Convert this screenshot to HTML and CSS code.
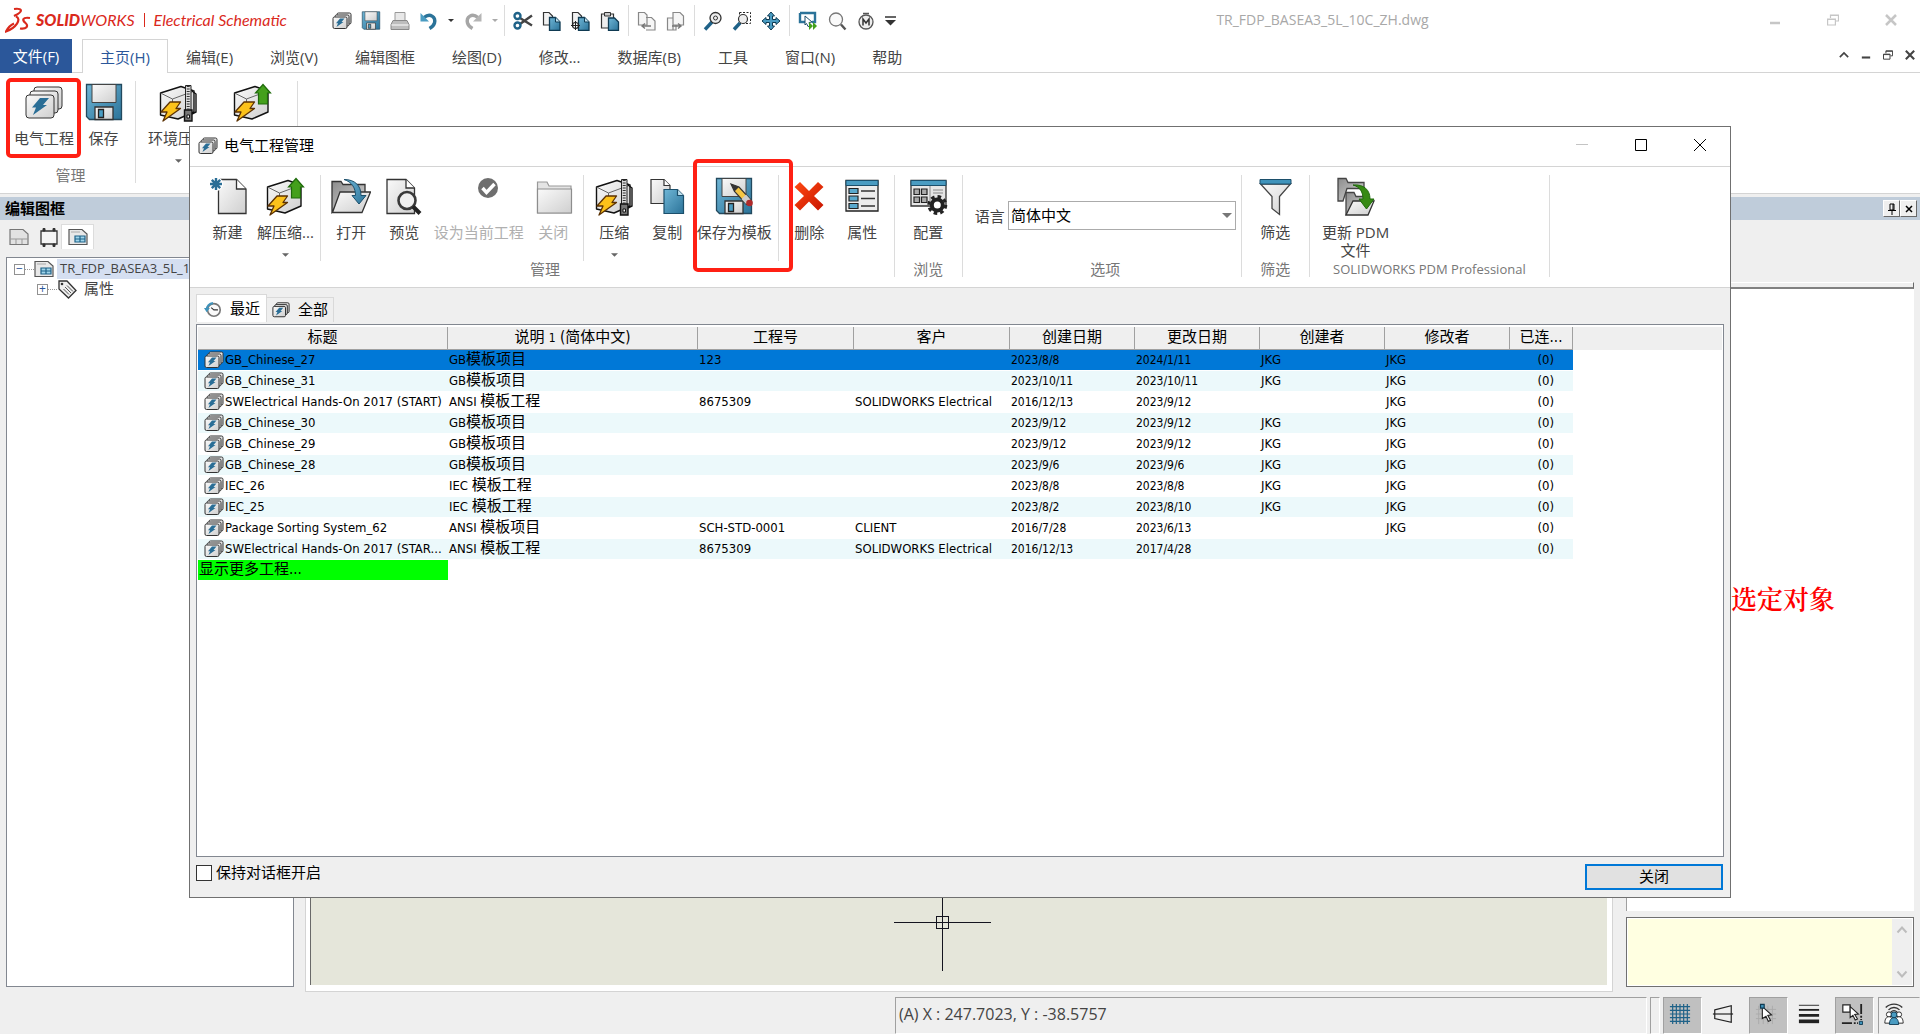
FILE: index.html
```html
<!DOCTYPE html>
<html lang="zh-CN">
<head>
    <meta charset="UTF-8">
    <meta name="viewport" content="width=device-width, initial-scale=1.0">
    <title>SOLIDWORKS Electrical Schematic</title>
    <link rel="stylesheet" href="styles.css">
</head>
<body>
    <!-- icon set -->
    <svg class="sprite" aria-hidden="true">
        <defs>
            <linearGradient id="gGray" x1="0" y1="0" x2="1" y2="1"><stop offset="0" stop-color="#fafafa"/><stop offset="1" stop-color="#cfcfcf"/></linearGradient>
            <linearGradient id="gDark" x1="0" y1="0" x2="1" y2="1"><stop offset="0" stop-color="#8c8c8c"/><stop offset="1" stop-color="#d8d8d8"/></linearGradient>
            <linearGradient id="gBlue" x1="0" y1="0" x2="1" y2="1"><stop offset="0" stop-color="#6fb6d6"/><stop offset="1" stop-color="#2b7399"/></linearGradient>
            <linearGradient id="gRed" x1="0" y1="0" x2="1" y2="1"><stop offset="0" stop-color="#ff4a12"/><stop offset="1" stop-color="#c81400"/></linearGradient>
        </defs>
        <symbol id="i-project" viewBox="0 0 40 40">
            <g fill="url(#gGray)" stroke="#333" stroke-linejoin="round">
                <rect class="thin" x="10" y="4" width="28" height="22" rx="3"/>
                <rect class="thin" x="6" y="8" width="28" height="22" rx="3"/>
                <rect class="thin" x="2" y="12" width="28" height="23" rx="3"/>
            </g>
            <path d="M16 15h9l-6 7h4L9 32l3-7.500H8z" fill="#2a6e96"/>
        </symbol>
        <symbol id="i-save" viewBox="0 0 40 40">
            <path d="M2.500 1.500h35v35h-32l-3-3z" fill="url(#gBlue)" stroke="#22495e" stroke-width="1.300"/>
            <path d="M8 1.500h24v18H8z" fill="url(#gGray)" stroke="#444"/>
            <path d="M11 24h18v12.500H11z" fill="url(#gGray)" stroke="#333" stroke-width="1.300"/>
            <path d="M14.500 26.500h5v8h-5z" fill="#4a9cc2" stroke="#222" stroke-width="1.300"/>
        </symbol>
        <symbol id="i-cube" viewBox="0 0 40 40">
            <path d="M2.500 10 23 3.500l13 4.500v21L20 36 2.500 32z" fill="url(#gGray)" stroke="#111" stroke-width="1.400" stroke-linejoin="round"/>
            <path d="m2.500 10 12 6L36 8M14.500 16v8" fill="none" stroke="#666"/>
            <path d="M12 19h10.500L18 25.500h4.500L5 38l4-9H3z" fill="#fcc21b" stroke="#5c3203" stroke-width="1.300" stroke-linejoin="round"/>
        </symbol>
        <symbol id="i-archive" viewBox="0 0 40 40">
            <use href="#i-cube" width="40" height="40"/>
            <path d="M27.500 2.500h5.500V28h-5.500z" fill="#ddd" stroke="#222"/>
            <path d="M30.200 3v24" stroke="#333" stroke-width="3" stroke-dasharray="1 1.500"/>
            <path d="M26.500 27h7.500v11h-7.500z" fill="#777" stroke="#111" stroke-width="1.400"/>
            <path d="M29 32h2.500v3H29z" fill="#fff" stroke="#111"/>
            <path d="m34 8 4 3v18l-4 2" fill="none" stroke="#111" stroke-width="1.400"/>
        </symbol>
        <symbol id="i-unarchive" viewBox="0 0 40 40">
            <use href="#i-cube" width="40" height="40"/>
            <path d="m31 1.500 7.500 8.500h-3v11h-9V10h-3z" fill="#44a01c" stroke="#1f6a0b" stroke-width="1.200"/>
        </symbol>
        <symbol id="i-new" viewBox="0 0 40 40">
            <path d="M10.500 2.500h18l9.500 9.500v24.500H10.500z" fill="url(#gGray)" stroke="#333" stroke-width="1.300"/>
            <path d="M28.500 2.500V12H38" fill="#fff" stroke="#333" stroke-width="1.300"/>
            <circle cx="8" cy="7" r="7" fill="#fff"/>
            <path d="M8 1v12M2 7h12M3.800 2.800l8.400 8.400M12.200 2.800l-8.400 8.400" stroke="#2a6e96" stroke-width="2.400"/>
        </symbol>
        <symbol id="i-open" viewBox="0 0 40 40">
            <path d="M1 35V4.500h9l2 3h22V20H10z" fill="url(#gDark)" stroke="#333" stroke-width="1.300"/>
            <path d="M1.500 35.500 9 15h30.500L31 35.500z" fill="url(#gGray)" stroke="#333" stroke-width="1.300"/>
            <path d="M13 2.500c11 0 17 6 17 16h5l-7 8.500-7-8.500h3.500C24.500 11 21 5 13 2.500z" fill="url(#gBlue)" stroke="#1c4f6b"/>
        </symbol>
        <symbol id="i-preview" viewBox="0 0 40 40">
            <path d="M3 2.500h19l8.500 8.500v25.500H3z" fill="url(#gGray)" stroke="#333" stroke-width="1.300"/>
            <path d="M22 2.500V11h8.500" fill="#fff" stroke="#333" stroke-width="1.300"/>
            <circle cx="23" cy="23.500" r="8.500" fill="#f0f0f0" stroke="#3a3a3a" stroke-width="2.600"/>
            <path d="m29 29.500 7 7" stroke="#222" stroke-width="4"/>
        </symbol>
        <symbol id="i-check" viewBox="0 0 40 40">
            <circle cx="29" cy="11" r="10" fill="#6e6e6e"/>
            <path d="m23.500 11 4 4.500 8-8.500" fill="none" stroke="#fff" stroke-width="3.400"/>
        </symbol>
        <symbol id="i-folder" viewBox="0 0 40 40">
            <path d="M4.500 36V5h9.500l2 4h22v27z" fill="#e4e4e4" stroke="#999" stroke-width="1.200"/>
            <path d="M4.500 12h34v24h-34z" fill="url(#gGray)" stroke="#8d8d8d" stroke-width="1.200"/>
        </symbol>
        <symbol id="i-copy" viewBox="0 0 40 40">
            <path d="M4 2.500h13l6 6v18H4z" fill="url(#gGray)" stroke="#333" stroke-width="1.200"/>
            <path d="M17 2.500v6h6" fill="#fff" stroke="#333" stroke-width="1.200"/>
            <path d="M17 12.500h13.500l6 6v18H17z" fill="url(#gBlue)" stroke="#1c4f6b" stroke-width="1.200"/>
            <path d="M30.500 12.500v6h6" fill="#bfe0ee" stroke="#1c4f6b" stroke-width="1.200"/>
        </symbol>
        <symbol id="i-savetpl" viewBox="0 0 40 40">
            <use href="#i-save" width="40" height="40"/>
            <path d="m17 7 8 3 12 13-4.500 4.500-12-13z" fill="#f5c542" stroke="#333" stroke-width="1.200"/>
            <path d="m17 7 8 3-4.500 4.500z" fill="#333"/>
            <path d="m32 17.500 4.500 5-4.500 4.500-4.500-5z" fill="#ccc"/>
            <circle cx="35.500" cy="26" r="3.300" fill="#b02a2a"/>
        </symbol>
        <symbol id="i-delete" viewBox="0 0 40 40">
            <path d="m11 5 9 9 9-9 5.500 5-9.500 9 9.500 9-5.500 5.500-9-9-9 9L5.500 28l9.500-9-9.500-9z" fill="url(#gRed)"/>
        </symbol>
        <symbol id="i-props" viewBox="0 0 40 40">
            <path d="M4 3.500h32v30.500H4z" fill="#ececec" stroke="#222" stroke-width="1.300"/>
            <path d="M4 3.500h32v5H4z" fill="#4a9cc2" stroke="#1c4f6b"/>
            <path d="M7 11.500h9v5H7zM7 19h9v5H7zM7 26.500h9v5H7z" fill="#5aa9cd" stroke="#222" stroke-width="1.200"/>
            <path d="M19 14h14M19 21.500h14M19 29h14" stroke="#333" stroke-width="1.300"/>
        </symbol>
        <symbol id="i-config" viewBox="0 0 40 40">
            <path d="M3 3.500h35V29H3z" fill="#e6e6e6" stroke="#333" stroke-width="1.300"/>
            <path d="M3 3.500h35v5H3z" fill="#4a9cc2" stroke="#1c4f6b"/>
            <path d="M6 12h5.500v5.500H6zM13.500 12H19v5.500h-5.500zM6 20h5.500v5.500H6zM13.500 20H19v5.500h-5.500z" fill="#aaa" stroke="#222" stroke-width="1.200"/>
            <path d="M22 9v20M25 13h10M25 16h10" stroke="#888"/>
            <circle cx="29.300" cy="28" r="8.500" fill="none" stroke="#222" stroke-width="3" stroke-dasharray="3.600 3.075"/>
            <circle cx="29.300" cy="28" r="5.500" fill="#fff" stroke="#222" stroke-width="4"/>
        </symbol>
        <symbol id="i-filter" viewBox="0 0 40 40">
            <path d="M5.500 7h30L24.500 19.500v18l-7.500-6v-12z" fill="url(#gGray)" stroke="#444" stroke-width="1.300"/>
            <path d="M5 2.500h31V7H5z" fill="#3f93bb" stroke="#1c4f6b"/>
        </symbol>
        <symbol id="i-pdm" viewBox="0 0 40 40">
            <path d="M2 24V1.500h8l2 4h16v6H11L7 24z" fill="url(#gDark)" stroke="#444" stroke-width="1.300"/>
            <path d="M10 38V15.500h8l2 4h10v8" fill="url(#gDark)" stroke="#444" stroke-width="1.300"/>
            <path d="m10 38 7-14h21l-6 14z" fill="url(#gGray)" stroke="#333" stroke-width="1.300"/>
            <path d="M17 8c11-1 17 5 17 14h4l-7.500 10L23 22h4c0-7-3-12-10-14z" fill="#378a14" stroke="#1f6a0b"/>
        </symbol>
        <symbol id="i-print" viewBox="0 0 20 20">
            <path d="M5 1.500h10V11H5z" fill="#e8e8e8" stroke="#999"/>
            <path d="M3 9.500h14l2 4v5H1v-5z" fill="#bdbdbd" stroke="#888"/>
            <path d="M1.500 14h17" stroke="#fff"/>
        </symbol>
        <symbol id="i-undo" viewBox="0 0 20 20">
            <path d="M5 6.500C11 1.500 17 6 15.500 12c-.7 2.700-2.500 4-5 5.500" fill="none" stroke="#2b7399" stroke-width="3.400"/>
            <path d="M1.500 2v8.500H10z" fill="#4a9cc2"/>
        </symbol>
        <symbol id="i-redo" viewBox="0 0 20 20">
            <path d="M15 6.500C9 1.500 3 6 4.500 12c.7 2.700 2.500 4 5 5.500" fill="none" stroke="#a6a6a6" stroke-width="3.400"/>
            <path d="M18.500 2v8.500H10z" fill="#b5b5b5"/>
        </symbol>
        <symbol id="i-cut" viewBox="0 0 20 20">
            <path d="M7 7l12 7.500M7 13l12-8.500" stroke="#444" stroke-width="2.400"/>
            <circle cx="4.500" cy="5" r="3" fill="none" stroke="#1f6288" stroke-width="2.400"/>
            <circle cx="4.500" cy="14.500" r="3" fill="none" stroke="#1f6288" stroke-width="2.400"/>
        </symbol>
        <symbol id="i-copys" viewBox="0 0 20 20">
            <path d="M1.500 1.500H7l3.500 3.500v9h-9z" fill="#f2f2f2" stroke="#333" stroke-width="1.200"/>
            <path d="M7.500 6.500h6L18 11v8.500H7.500z" fill="url(#gBlue)" stroke="#0f3a52" stroke-width="1.300"/>
            <path d="M13.500 6.500V11H18" fill="#bfe0ee" stroke="#0f3a52"/>
        </symbol>
        <symbol id="i-copybase" viewBox="0 0 20 20">
            <use href="#i-copys" width="20" height="20"/>
            <circle cx="4.500" cy="14.500" r="3" fill="#fff" stroke="#222" stroke-width="1.200"/>
            <path d="M4.500 10v9M0 14.500h9" stroke="#222"/>
        </symbol>
        <symbol id="i-paste" viewBox="0 0 20 20">
            <path d="M1.500 3h12v14h-12z" fill="#eee" stroke="#333" stroke-width="1.200"/>
            <path d="M4.500 1.500h6V5h-6z" fill="#ccc" stroke="#333"/>
            <path d="M8.500 7h6l4 4v8.500h-10z" fill="url(#gBlue)" stroke="#0f3a52" stroke-width="1.300"/>
        </symbol>
        <symbol id="i-docin" viewBox="0 0 20 20">
            <path d="M1.500 1.500h6L10 4v10H1.500zM9 6.500h5.500L18 10v9H9" fill="#f6f6f6" stroke="#888" stroke-width="1.200"/>
            <path d="M14 15H5m3-2.500L5 15l3 2.500" fill="none" stroke="#777" stroke-width="1.400"/>
        </symbol>
        <symbol id="i-docout" viewBox="0 0 20 20">
            <path d="M7 1.500h7L17.500 5v9H7zM1.500 7H7v12H1.500zM10 14v5H2" fill="#f6f6f6" stroke="#888" stroke-width="1.200"/>
            <path d="M6 15h9m-3-2.500 3 2.500-3 2.500" fill="none" stroke="#777" stroke-width="1.400"/>
        </symbol>
        <symbol id="i-zoom" viewBox="0 0 20 20">
            <path d="m9 11-7 7.500" stroke="#1f6288" stroke-width="3.400"/>
            <circle cx="12.500" cy="7" r="5.500" fill="#eee" stroke="#333" stroke-width="1.300"/>
            <circle cx="12.500" cy="7" r="2" fill="none" stroke="#333"/>
        </symbol>
        <symbol id="i-zoomwin" viewBox="0 0 20 20">
            <path d="M7.500 1.500h11v11h-11z" fill="none" stroke="#222" stroke-dasharray="2 1.500"/>
            <path d="m8 12-6 6.500" stroke="#1f6288" stroke-width="3.400"/>
            <circle cx="11" cy="8" r="4.500" fill="#eee" stroke="#333" stroke-width="1.200"/>
        </symbol>
        <symbol id="i-pan" viewBox="0 0 20 20">
            <path d="m10 1 3.500 4h-2v3.500H15v-2l4 3.500-4 3.500v-2h-3.500V15h2L10 19l-3.500-4h2v-3.500H5v2L1 10l4-3.500v2h3.500V5h-2z" fill="#4a9cc2" stroke="#0f3a52"/>
        </symbol>
        <symbol id="i-screen" viewBox="0 0 20 20">
            <path d="M2 2h15v9h-3M2 2v9h6" fill="none" stroke="#2b7399" stroke-width="2.400"/>
            <path d="m7 5 7 6-3 .5 1 3.500-2 .5-1.500-3L7 14z" fill="#fff" stroke="#1c4f6b"/>
            <path d="m11 11 4 4-4 4zm4 0 4 4-4 4z" fill="#44a01c"/>
        </symbol>
        <symbol id="i-search" viewBox="0 0 20 20">
            <circle cx="9" cy="8.500" r="6.500" fill="#fafafa" stroke="#777" stroke-width="1.300"/>
            <path d="m14 13.500 4.500 5" stroke="#555" stroke-width="2.400"/>
        </symbol>
        <symbol id="i-motor" viewBox="0 0 20 20">
            <path d="M7 2.500h6" stroke="#555" stroke-width="1.500"/>
            <circle cx="10" cy="11" r="7" fill="#eee" stroke="#555" stroke-width="1.300"/>
            <path d="M7 14.500V8l3 4 3-4v6.500" fill="none" stroke="#333" stroke-width="1.500"/>
        </symbol>
        <symbol id="i-sheet" viewBox="0 0 20 20">
            <path d="M1 2.500h13l5 4.500v10.500H1z" fill="#e2e2e2" stroke="#777" stroke-width="1.200"/>
            <path d="M1 12h18M7 12v5M13 12v5" stroke="#999"/>
        </symbol>
        <symbol id="i-frame" viewBox="0 0 20 20">
            <path d="M2 4h16v13H2z" fill="#f4f4f4" stroke="#333" stroke-width="1.300"/>
            <path d="M4 1.500h2V4H4zM14 1.500h2V4h-2zM4 17h2v2.500H4zM14 17h2v2.500h-2z" fill="#333" stroke="#333"/>
        </symbol>
        <symbol id="i-layout" viewBox="0 0 20 20">
            <path d="M1 2.500h13l5 4.500v10.500H1z" fill="#e8e8e8" stroke="#555" stroke-width="1.200"/>
            <path d="M3 5h9" stroke="#aaa"/>
            <path d="M7 9h10v6H7zM7 12h10M12 9v6" fill="#9fd4ea" stroke="#1f6288" stroke-width="1.200"/>
        </symbol>
        <symbol id="i-tag" viewBox="0 0 20 20">
            <path d="M2 2h8l9 9.500L11.500 19 2 10z" fill="#eee" stroke="#333" stroke-width="1.300"/>
            <circle cx="5" cy="5" r="1.300" fill="#333"/>
            <path d="m8 8 6 6M10 6.500l6 6M6.500 10l5.500 5.500" stroke="#555"/>
        </symbol>
        <symbol id="i-clock" viewBox="0 0 20 20">
            <circle cx="11" cy="11" r="7" fill="#fafafa" stroke="#777" stroke-width="1.800"/>
            <path d="M8 8.500l3 2.500h4.500" fill="none" stroke="#333" stroke-width="1.200"/>
            <path d="M3 11c0-4 3-7 7-7.500" fill="none" stroke="#3f93bb" stroke-width="2.400"/>
            <path d="M0 9h6.500L3 13.500z" fill="#3f93bb"/>
        </symbol>
        <symbol id="i-grid" viewBox="0 0 24 24">
            <path d="M4 1v22M8 1v22M12 1v22M16 1v22M20 1v22M1 4h22M1 8h22M1 12h22M1 16h22M1 20h22" stroke="#1f6288" stroke-width="1.300"/>
        </symbol>
        <symbol id="i-ortho" viewBox="0 0 24 24">
            <path d="M3 7.500 21 3v18L3 17z" fill="none" stroke="#222" stroke-width="1.300"/>
            <path d="M1 12h22" stroke="#222" stroke-width="1.300"/>
        </symbol>
        <symbol id="i-snap" viewBox="0 0 24 24">
            <path d="M4 3v20M9 3v20M14 3v20M19 3v20M1 7h22M1 12h22M1 17h22" stroke="#aaa"/>
            <path d="m8 4 10 9-4 .5 3 5.500-2.500 1-2.500-5.500L8 17z" fill="#fff" stroke="#222" stroke-width="1.200"/>
            <path d="M6 1.500h4v4H6z" fill="#3f93bb" stroke="#0f3a52" stroke-width="1.300"/>
        </symbol>
        <symbol id="i-weight" viewBox="0 0 24 24">
            <path d="M1 2.500h22" stroke="#222"/>
            <path d="M1 7.500h22" stroke="#222" stroke-width="2"/>
            <path d="M1 13.500h22" stroke="#222" stroke-width="3"/>
            <path d="M1 20h22" stroke="#222" stroke-width="4"/>
        </symbol>
        <symbol id="i-track" viewBox="0 0 24 24">
            <path d="M2 2h8v8H2z" fill="#fff" stroke="#222" stroke-width="1.300"/>
            <path d="m10 4 9 8-4 .5 3 5-2.500 1-2.500-5L10 16z" fill="#fff" stroke="#222" stroke-width="1.200"/>
            <path d="M22 1v11M22 14v2M22 17.500v1M1 22h11M14 22h2M17.500 22h1" stroke="#222" stroke-width="2"/>
            <path d="M20 20h3.500v3.500H20z" fill="#3f93bb" stroke="#0f3a52"/>
        </symbol>
        <symbol id="i-users" viewBox="0 0 24 24">
            <path d="M3 5c5-5 13-5 18 0M6 7.500c3.500-3.500 8.500-3.500 12 0M8.500 10c2-2 5-2 7 0" fill="none" stroke="#333" stroke-width="1.500"/>
            <circle cx="6.500" cy="12.500" r="2.800" fill="#fff" stroke="#222"/>
            <circle cx="17.500" cy="12.500" r="2.800" fill="#fff" stroke="#222"/>
            <path d="M2 22c0-5 2-7 4.500-7s4 2 4 7zM13.500 22c0-5 1.500-7 4-7S22 17 22 22z" fill="#fff" stroke="#222"/>
            <circle cx="12" cy="13" r="3.200" fill="#4a9cc2" stroke="#0f3a52"/>
            <path d="M7 23.500c0-5 2-7.500 5-7.500s5 2.500 5 7.500z" fill="#4a9cc2" stroke="#0f3a52"/>
        </symbol>
        <symbol id="i-min" viewBox="0 0 12 12"><path d="M1 9h10" stroke="currentColor" stroke-width="2.500"/></symbol>
        <symbol id="i-restore" viewBox="0 0 12 12"><path d="M.6 5h7.800v6H.6zM.6 5.500h8M3.500 4V1h8v6H9M3.500 1.500h8" fill="none" stroke="currentColor" stroke-width="1.200"/></symbol>
        <symbol id="i-x" viewBox="0 0 12 12"><path d="m1 1 10 10M11 1 1 11" stroke="currentColor" stroke-width="2.500"/></symbol>
        <symbol id="i-up" viewBox="0 0 12 12"><path d="m1 8.500 5-5 5 5" fill="none" stroke="currentColor" stroke-width="2"/></symbol>
        <symbol id="i-caret" viewBox="0 0 8 4"><path d="M0 0h8L4 4z" fill="currentColor"/></symbol>
    </svg>

    <header class="titlebar">
        <div class="brand">
            <svg class="brand-mark" viewBox="0 0 26 26" fill="none" stroke="#da291c" stroke-width="2.200">
                <path d="M9 2c8-1 9 2 3 5.500L9 9M11 9.500C17 12 11 21 1 24.500c2-4 4.500-6.500 8-8"/>
                <path d="M25 11c-8-1-8 2-4.500 5 3.500 3 1 6.500-5.500 5.500"/>
            </svg>
            <span class="brand-name"><b>SOLID</b>WORKS</span>
            <span class="brand-bar"></span>
            <span class="brand-product">Electrical Schematic</span>
        </div>
        <div class="quick">
            <button aria-label="电气工程"><svg><use href="#i-project"/></svg></button>
            <button aria-label="保存"><svg><use href="#i-save"/></svg></button>
            <button aria-label="打印"><svg><use href="#i-print"/></svg></button>
            <button aria-label="撤销"><svg><use href="#i-undo"/></svg></button>
            <svg class="caret"><use href="#i-caret"/></svg>
            <button aria-label="重做"><svg><use href="#i-redo"/></svg></button>
            <svg class="caret off"><use href="#i-caret"/></svg>
            <span class="quick-sep"></span>
            <button aria-label="剪切"><svg><use href="#i-cut"/></svg></button>
            <button aria-label="复制"><svg><use href="#i-copys"/></svg></button>
            <button aria-label="带基点复制"><svg><use href="#i-copybase"/></svg></button>
            <button aria-label="粘贴"><svg><use href="#i-paste"/></svg></button>
            <span class="quick-sep"></span>
            <button aria-label="上一张"><svg><use href="#i-docin"/></svg></button>
            <button aria-label="下一张"><svg><use href="#i-docout"/></svg></button>
            <span class="quick-sep"></span>
            <button aria-label="缩放"><svg><use href="#i-zoom"/></svg></button>
            <button aria-label="窗口缩放"><svg><use href="#i-zoomwin"/></svg></button>
            <button aria-label="平移"><svg><use href="#i-pan"/></svg></button>
            <span class="quick-sep"></span>
            <button aria-label="转到"><svg><use href="#i-screen"/></svg></button>
            <button aria-label="搜索"><svg><use href="#i-search"/></svg></button>
            <button aria-label="设备"><svg><use href="#i-motor"/></svg></button>
            <svg class="more" viewBox="0 0 11 10"><path d="M0 1h11" stroke="#333" stroke-width="1.500"/><path d="M0 4h11L5.500 9.500z" fill="#333"/></svg>
        </div>
        <div class="doc-title">TR_FDP_BASEA3_5L_10C_ZH.dwg</div>
        <div class="win-buttons">
            <button aria-label="最小化"><svg><use href="#i-min"/></svg></button>
            <button aria-label="还原"><svg><use href="#i-restore"/></svg></button>
            <button aria-label="退出"><svg><use href="#i-x"/></svg></button>
        </div>
    </header>

    <nav class="menu">
        <button class="menu-file">文件(F)</button>
        <button class="menu-tab active">主页(H)</button>
        <button class="menu-tab">编辑(E)</button>
        <button class="menu-tab">浏览(V)</button>
        <button class="menu-tab">编辑图框</button>
        <button class="menu-tab">绘图(D)</button>
        <button class="menu-tab">修改...</button>
        <button class="menu-tab">数据库(B)</button>
        <button class="menu-tab">工具</button>
        <button class="menu-tab">窗口(N)</button>
        <button class="menu-tab">帮助</button>
        <div class="doc-buttons">
            <button aria-label="折叠功能区"><svg><use href="#i-up"/></svg></button>
            <button aria-label="最小化文档"><svg><use href="#i-min"/></svg></button>
            <button aria-label="还原文档"><svg><use href="#i-restore"/></svg></button>
            <button aria-label="关闭文档"><svg><use href="#i-x"/></svg></button>
        </div>
    </nav>

    <div class="ribbon">
        <div class="group">
            <div class="tools">
                <button class="tool"><svg><use href="#i-project"/></svg><span>电气工程</span><i class="mark mark-project"></i></button>
                <button class="tool"><svg><use href="#i-save"/></svg><span>保存</span></button>
            </div>
            <div class="group-name">管理</div>
        </div>
        <div class="group group-env">
            <div class="tools">
                <button class="tool"><svg><use href="#i-archive"/></svg><span>环境压缩</span><svg class="drop"><use href="#i-caret"/></svg></button>
                <button class="tool"><svg><use href="#i-unarchive"/></svg><span>环境解压缩</span></button>
            </div>
        </div>
    </div>

    <main class="workspace">
        <aside class="left-panel">
            <div class="panel-head">编辑图框</div>
            <div class="panel-tabs">
                <button aria-label="图纸"><svg><use href="#i-sheet"/></svg></button>
                <button aria-label="符号"><svg><use href="#i-frame"/></svg></button>
                <button class="active" aria-label="图框"><svg><use href="#i-layout"/></svg></button>
            </div>
            <div class="tree">
                <div class="node"><span class="expander">−</span><span class="dots"></span><svg><use href="#i-layout"/></svg><span class="node-name picked">TR_FDP_BASEA3_5L_10C_ZH</span></div>
                <div class="node child"><span class="expander">+</span><span class="dots"></span><svg><use href="#i-tag"/></svg><span class="node-name">属性</span></div>
            </div>
        </aside>

        <section class="drawing">
            <div class="canvas">
                <svg class="crosshair" viewBox="0 0 97 97" stroke="#14141f" fill="none"><path d="M48.500 0v97M0 48.500h97"/><rect x="42.500" y="42.500" width="12" height="12"/></svg>
            </div>
        </section>

        <aside class="right-panel">
            <div class="panel-head">
                <button aria-label="固定"><svg viewBox="0 0 12 12"><path d="M4 1h4v6H4zM7 1v6M2 7.500h8M6 8v4" fill="none" stroke="#000"/></svg></button>
                <button aria-label="关闭面板"><svg viewBox="0 0 12 12"><path d="m3 3 6 6M9 3 3 9" stroke="#000" stroke-width="1.500"/></svg></button>
            </div>
            <div class="panel-edge"></div>
            <div class="panel-body">选定对象</div>
            <div class="hint">
                <textarea aria-label="说明" readonly></textarea>
                <div class="hint-scroll">
                    <svg viewBox="0 0 12 12"><path d="m1.500 8.500 4.500-5 4.500 5" fill="none" stroke="#bdbdbd" stroke-width="2"/></svg>
                    <svg viewBox="0 0 12 12"><path d="m1.500 3.500 4.500 5 4.500-5" fill="none" stroke="#bdbdbd" stroke-width="2"/></svg>
                </div>
            </div>
        </aside>
    </main>

    <footer class="statusbar">
        <div class="coords">(A) X : 247.7023, Y : -38.5757</div>
        <div class="status-gap"></div>
        <div class="toggles">
            <button class="on" aria-label="栅格"><svg><use href="#i-grid"/></svg></button>
            <button aria-label="正交"><svg><use href="#i-ortho"/></svg></button>
            <button class="on" aria-label="捕捉"><svg><use href="#i-snap"/></svg></button>
            <button aria-label="线宽"><svg><use href="#i-weight"/></svg></button>
            <button class="on" aria-label="对象捕捉"><svg><use href="#i-track"/></svg></button>
            <button class="edge" aria-label="用户"><svg><use href="#i-users"/></svg></button>
        </div>
    </footer>

    <div class="dialog" role="dialog" aria-labelledby="dialogTitle">
        <div class="dialog-head">
            <svg class="dialog-icon"><use href="#i-project"/></svg>
            <h1 id="dialogTitle">电气工程管理</h1>
            <div class="dialog-buttons">
                <button aria-label="最小化" disabled><svg viewBox="0 0 12 12"><path d="M0 5.500h12" stroke="#c4c4c4"/></svg></button>
                <button aria-label="最大化"><svg viewBox="0 0 12 12"><path d="M.5.5h11v11H.5z" fill="none" stroke="#000"/></svg></button>
                <button aria-label="关闭窗口"><svg viewBox="0 0 12 12"><path d="m0 0 12 12M12 0 0 12" stroke="#000"/></svg></button>
            </div>
        </div>

        <div class="ribbon">
            <div class="group">
                <div class="tools">
                    <button class="tool"><svg><use href="#i-new"/></svg><span>新建</span></button>
                    <button class="tool"><svg><use href="#i-unarchive"/></svg><span>解压缩...</span><svg class="drop"><use href="#i-caret"/></svg></button>
                    <span class="sep"></span>
                    <button class="tool"><svg><use href="#i-open"/></svg><span>打开</span></button>
                    <button class="tool"><svg><use href="#i-preview"/></svg><span>预览</span></button>
                    <button class="tool" disabled><svg><use href="#i-check"/></svg><span>设为当前工程</span></button>
                    <button class="tool" disabled><svg><use href="#i-folder"/></svg><span>关闭</span></button>
                    <span class="sep"></span>
                    <button class="tool"><svg><use href="#i-archive"/></svg><span>压缩</span><svg class="drop"><use href="#i-caret"/></svg></button>
                    <button class="tool"><svg><use href="#i-copy"/></svg><span>复制</span></button>
                    <button class="tool"><svg><use href="#i-savetpl"/></svg><span>保存为模板</span><i class="mark mark-template"></i></button>
                    <span class="sep"></span>
                    <button class="tool"><svg><use href="#i-delete"/></svg><span>删除</span></button>
                    <button class="tool"><svg><use href="#i-props"/></svg><span>属性</span></button>
                </div>
                <div class="group-name">管理</div>
            </div>
            <div class="group group-single">
                <div class="tools">
                    <button class="tool"><svg><use href="#i-config"/></svg><span>配置</span></button>
                </div>
                <div class="group-name">浏览</div>
            </div>
            <div class="group group-options">
                <div class="language">
                    <label for="language">语言</label>
                    <div class="select-box">
                        <select id="language">
                            <option>简体中文</option>
                        </select>
                        <svg><use href="#i-caret"/></svg>
                    </div>
                </div>
                <div class="group-name">选项</div>
            </div>
            <div class="group group-single">
                <div class="tools">
                    <button class="tool"><svg><use href="#i-filter"/></svg><span>筛选</span></button>
                </div>
                <div class="group-name">筛选</div>
            </div>
            <div class="group group-pdm">
                <div class="tools">
                    <button class="tool"><svg><use href="#i-pdm"/></svg><span>更新 PDM<br>文件</span></button>
                </div>
                <div class="group-name">SOLIDWORKS PDM Professional</div>
            </div>
        </div>

        <div class="list-tabs">
            <button class="active"><svg><use href="#i-clock"/></svg><span>最近</span></button>
            <button><svg><use href="#i-project"/></svg><span>全部</span></button>
        </div>

        <div class="list">
            <table>
                <colgroup>
                    <col class="c-text"><col class="c-text"><col class="c-mid"><col class="c-mid">
                    <col class="c-date"><col class="c-date"><col class="c-date"><col class="c-date"><col class="c-num"><col>
                </colgroup>
                <thead>
                    <tr>
                        <th>标题</th><th>说明 <small>1</small> (简体中文)</th><th>工程号</th><th>客户</th><th>创建日期</th>
                        <th>更改日期</th><th>创建者</th><th>修改者</th><th>已连...</th><td></td>
                    </tr>
                </thead>
                <tbody id="projects"></tbody>
            </table>
        </div>

        <div class="dialog-foot">
            <label><input type="checkbox"><span>保持对话框开启</span></label>
            <button class="close-button">关闭</button>
        </div>
    </div>

    <script>
        const projects = [
            ["GB_Chinese_27", "GB", "模板项目", "123", "", "2023/8/8", "2024/1/11", "JKG", "JKG"],
            ["GB_Chinese_31", "GB", "模板项目", "", "", "2023/10/11", "2023/10/11", "JKG", "JKG"],
            ["SWElectrical Hands-On 2017 (START)", "ANSI ", "模板工程", "8675309", "SOLIDWORKS Electrical", "2016/12/13", "2023/9/12", "", "JKG"],
            ["GB_Chinese_30", "GB", "模板项目", "", "", "2023/9/12", "2023/9/12", "JKG", "JKG"],
            ["GB_Chinese_29", "GB", "模板项目", "", "", "2023/9/12", "2023/9/12", "JKG", "JKG"],
            ["GB_Chinese_28", "GB", "模板项目", "", "", "2023/9/6", "2023/9/6", "JKG", "JKG"],
            ["IEC_26", "IEC ", "模板工程", "", "", "2023/8/8", "2023/8/8", "JKG", "JKG"],
            ["IEC_25", "IEC ", "模板工程", "", "", "2023/8/2", "2023/8/10", "JKG", "JKG"],
            ["Package Sorting System_62", "ANSI ", "模板项目", "SCH-STD-0001", "CLIENT", "2016/7/28", "2023/6/13", "", "JKG"],
            ["SWElectrical Hands-On 2017 (STAR...", "ANSI ", "模板工程", "8675309", "SOLIDWORKS Electrical", "2016/12/13", "2017/4/28", "", ""]
        ];

        function showProjects(items) {
            const rows = items.map(([title, std, kind, number, client, created, changed, author, editor], i) => `
                <tr class="${i === 0 ? 'selected' : ''}">
                    <td><div class="name"><svg><use href="#i-project"/></svg>${title}</div></td>
                    <td>${std}<span class="cn">${kind}</span></td>
                    <td>${number}</td>
                    <td>${client}</td>
                    <td class="date">${created}</td>
                    <td class="date">${changed}</td>
                    <td>${author}</td>
                    <td>${editor}</td>
                    <td class="num">(0)</td>
                </tr>
            `).join('');
            document.getElementById('projects').innerHTML = rows +
                '<tr class="show-more"><td><a href="#">显示更多工程...</a></td></tr>';
        }

        showProjects(projects);
    </script>
</body>
</html>
```
FILE: styles.css
```css
* {
    box-sizing: border-box;
}
body {
    display: flex;
    flex-direction: column;
    height: 100vh;
    margin: 0;
    overflow: hidden;
    background: #efefef;
    color: #444;
    font-family: "Open Sans", "Noto Sans CJK SC", sans-serif;
    font-size: 15px;
}
button {
    padding: 0;
    border: 0;
    background: none;
    color: inherit;
    font: inherit;
}
svg {
    display: block;
    flex: none;
}
.sprite {
    position: absolute;
    width: 0;
    height: 0;
}
.thin {
    stroke-width: 1px;
    vector-effect: non-scaling-stroke;
}

/* title bar */
.titlebar {
    display: flex;
    align-items: center;
    height: 39px;
    padding: 2px 0 0 5px;
    background: #fff;
}
.brand {
    display: flex;
    align-items: center;
    width: 327px;
    padding-bottom: 2px;
    color: #da291c;
    font-style: italic;
    white-space: nowrap;
}
.brand-mark {
    width: 26px;
    height: 26px;
    margin-right: 5px;
}
.brand-name {
    font-family: Lato, sans-serif;
    font-size: 16px;
}
.brand-name b {
    font-weight: 900;
}
.brand-bar {
    width: 1px;
    height: 14px;
    margin: 0 9px;
    background: #da291c;
}
.brand-product {
    font-family: Lato, sans-serif;
    font-size: 16px;
}
.quick {
    display: flex;
    align-items: center;
    gap: 9px;
}
.quick button svg {
    width: 20px;
    height: 20px;
}
.quick .caret {
    width: 6px;
    height: 3px;
    color: #333;
}
.quick .caret.off {
    margin-right: -2px;
    color: #aaa;
}
.quick-sep {
    width: 1px;
    height: 31px;
    margin: 0 -1px;
    background: #dcdcdc;
}
.quick .more {
    width: 11px;
    height: 10px;
}
.doc-title {
    flex: 1;
    padding: 0 20px 2px 0;
    color: #a8a8a8;
    font-size: 14px;
    text-align: center;
}
.win-buttons {
    display: flex;
    gap: 46px;
    margin-right: 23px;
    padding-bottom: 2px;
    color: #c6c6c6;
}
.win-buttons svg {
    width: 12px;
    height: 12px;
}

/* menu */
.menu {
    display: flex;
    height: 34px;
    background: linear-gradient(#d4d4d4, #d4d4d4) bottom / 100% 1px no-repeat #fff;
}
.menu-file {
    width: 72px;
    margin-right: 10px;
    padding-bottom: 2px;
    background: #2b579a;
    color: #fff;
}
.menu-tab {
    padding: 0 19px 0 18px;
}
.menu-tab.active {
    padding: 0 17px;
    border: 1px solid #d4d4d4;
    border-bottom: 0;
    background: #fff;
    color: #2b579a;
}
.doc-buttons {
    display: flex;
    align-items: center;
    gap: 12px;
    margin: 0 5px 2px auto;
}
.doc-buttons svg {
    width: 10px;
    height: 10px;
}

/* ribbon, shared by the main window and the dialog */
.ribbon {
    display: flex;
    height: 121px;
    padding: 8px 5px 0;
    border-bottom: 1px solid #d4d4d4;
    background: #fff;
    flex: none;
}
.group {
    display: flex;
    flex-direction: column;
    height: 102px;
    padding: 0 5px 0 6px;
    border-right: 1px solid #dcdcdc;
}
.group-env {
    padding-left: 9px;
}
.group-single {
    padding: 0 7px;
}
.group-options {
    padding: 0 5px 0 12px;
}
.group-pdm {
    min-width: 240px;
    padding: 0 9px;
}
.tools {
    display: flex;
}
.tool {
    position: relative;
    display: flex;
    flex-direction: column;
    align-items: center;
    min-width: 53px;
    height: 86px;
    padding: 2px 3px 0;
    line-height: 18px;
    white-space: nowrap;
}
.tool svg {
    width: 40px;
    height: 40px;
    margin-bottom: 6px;
}
.tool .drop {
    width: 7px;
    height: 4px;
    margin: 12px 0 0;
    color: #666;
}
.tool:disabled span {
    color: #b0b0b0;
}
.group-name {
    margin-top: auto;
    color: #777;
    line-height: 16px;
    text-align: center;
}
.group-pdm .group-name {
    font-size: 13px;
}
.sep {
    width: 1px;
    height: 86px;
    margin: 0 4px 0 3px;
    background: #dcdcdc;
}
.mark {
    position: absolute;
    border: 4px solid #ff2014;
    border-radius: 5px;
}
.mark-project {
    top: -3px;
    left: -5px;
    width: 75px;
    height: 80px;
}
.mark-template {
    top: -16px;
    left: -1px;
    width: 100px;
    height: 113px;
    z-index: 1;
}
.language {
    display: flex;
    align-items: center;
    gap: 3px;
    height: 80px;
}
.select-box {
    position: relative;
}
.select-box select {
    width: 228px;
    height: 29px;
    padding: 0 2px;
    appearance: none;
    border: 1px solid #ababab;
    border-radius: 0;
    background: #fff;
    color: #000;
    font: inherit;
}
.select-box svg {
    position: absolute;
    top: 12px;
    right: 4px;
    width: 10px;
    height: 5px;
    color: #777;
}

/* workspace */
.workspace {
    display: flex;
    flex: 1;
    min-height: 0;
    padding: 3px 0 5px;
}
.panel-head {
    height: 23px;
    padding: 0 5px;
    background: #bfccda;
    color: #000;
    font-weight: bold;
    line-height: 22px;
}
.left-panel {
    display: flex;
    flex-direction: column;
    width: 300px;
}
.panel-tabs {
    display: flex;
    height: 37px;
    padding: 4px 4px 8px;
}
.panel-tabs button {
    display: flex;
    align-items: center;
    justify-content: center;
    width: 30px;
}
.panel-tabs .active {
    width: 33px;
    margin-left: -3px;
    border: 1px solid #dcdcdc;
    border-bottom: 0;
    background: #fff;
}
.panel-tabs svg,
.tree svg {
    width: 20px;
    height: 20px;
}
.tree {
    flex: 1;
    margin: 0 6px 5px;
    padding: 1px 0 0 7px;
    overflow: hidden;
    border: 1px solid #828790;
    background: #fff;
}
.node {
    display: flex;
    align-items: center;
    height: 20px;
    white-space: nowrap;
}
.node.child {
    padding-left: 23px;
}
.expander {
    width: 11px;
    height: 11px;
    border: 1px solid #919191;
    color: #2b579a;
    font-size: 12px;
    line-height: 8px;
    text-align: center;
}
.dots {
    width: 9px;
    border-top: 1px dotted #999;
}
.node-name {
    height: 20px;
    padding: 0 3px;
    font-size: 13px;
    line-height: 19px;
}
.node-name.picked {
    margin-left: 3px;
    background: #d5dff1;
}
.node.child .node-name {
    padding-left: 7px;
    font-size: 15px;
    line-height: 18px;
}
.drawing {
    flex: 1;
    margin: 0 4px 0 5px;
    padding: 3px 5px 6px 4px;
    border: 1px solid #d4d4d4;
    background: #fff;
}
.canvas {
    position: relative;
    height: 100%;
    border-left: 1px solid #696969;
    background: #e5e6da;
}
.crosshair {
    position: absolute;
    left: 583px;
    bottom: 14px;
    width: 97px;
    height: 97px;
}
.right-panel {
    display: flex;
    flex-direction: column;
    width: 303px;
}
.right-panel .panel-head {
    display: flex;
    align-items: center;
    justify-content: flex-end;
    padding: 0 3px;
}
.right-panel .panel-head button {
    display: flex;
    align-items: center;
    justify-content: center;
    width: 17px;
    height: 17px;
    border: 1px solid;
    border-color: #fff #696969 #696969 #fff;
    background: #efefef;
}
.right-panel .panel-head svg {
    width: 12px;
    height: 12px;
}
.panel-edge {
    height: 7px;
    margin: 62px 6px 0 0;
    border: 1px solid #fff;
    border-right-color: #696969;
    border-bottom: 2px solid #808080;
}
.panel-body {
    flex: 1;
    display: flex;
    align-items: center;
    margin: 0 6px 6px 9px;
    padding-left: 104px;
    padding-bottom: 6px;
    border-left: 1px solid #a0a0a0;
    background: #fff;
    color: #f00;
    font-family: "Liberation Serif", "Noto Serif CJK SC", "Noto Sans CJK SC", serif;
    font-size: 26px;
    font-weight: 600;
}
.hint {
    display: flex;
    height: 70px;
    margin: 0 6px 5px 9px;
    padding: 1px;
    border: 1px solid #707070;
    background: #fff;
}
.hint textarea {
    flex: 1;
    min-width: 0;
    padding: 0;
    overflow: hidden;
    border: 0;
    background: #ffffe1;
    resize: none;
}
.hint-scroll {
    display: flex;
    flex-direction: column;
    justify-content: space-between;
    align-items: center;
    width: 20px;
    padding: 5px 0;
    background: #efefef;
}
.hint-scroll svg {
    width: 12px;
    height: 12px;
}

/* status bar */
.statusbar {
    display: flex;
    height: 37px;
    padding-left: 895px;
}
.coords {
    flex: 1;
    padding-left: 3px;
    border: 1px solid #a0a0a0;
    border-right-color: #fff;
    border-bottom-color: #fff;
    font-size: 16px;
    line-height: 33px;
}
.status-gap {
    width: 10px;
    margin: 0 3px;
    border: 1px solid #a0a0a0;
    border-right-color: #fff;
    border-bottom-color: #fff;
}
.toggles {
    display: flex;
    gap: 4px;
}
.toggles button {
    display: flex;
    align-items: center;
    justify-content: center;
    width: 39px;
    padding: 0 6px 3px 0;
    border: 1px solid transparent;
}
.toggles .on {
    border-color: #a0a0a0 #fff #fff #a0a0a0;
    background: #c0c0c0;
}
.toggles .edge {
    width: 42px;
    padding-right: 10px;
    border-color: #a0a0a0 #efefef #efefef #a0a0a0;
}
.toggles svg {
    width: 22px;
    height: 22px;
}

/* project manager dialog */
.dialog {
    position: absolute;
    top: 126px;
    right: 189px;
    bottom: 136px;
    left: 189px;
    display: flex;
    flex-direction: column;
    border: 1px solid #707070;
    background: #efefef;
}
.dialog-head {
    display: flex;
    align-items: center;
    height: 40px;
    padding: 0 24px 2px 8px;
    border-bottom: 1px solid #d4d4d4;
    background: #fff;
    color: #000;
}
.dialog-icon {
    width: 20px;
    height: 20px;
    margin-right: 6px;
}
.dialog h1 {
    margin: 0;
    padding-bottom: 2px;
    font-size: 15px;
    font-weight: normal;
}
.dialog-buttons {
    display: flex;
    gap: 47px;
    margin-left: auto;
    padding-bottom: 1px;
}
.dialog-buttons svg {
    width: 12px;
    height: 12px;
}
.list-tabs {
    display: flex;
    align-items: flex-end;
    height: 35px;
    margin: 0 6px;
    padding-bottom: 1px;
    color: #000;
}
.list-tabs button {
    display: flex;
    align-items: center;
    gap: 8px;
    height: 25px;
    padding: 0 5px;
    border: 1px solid #d9d9d9;
    border-width: 1px 1px 0 0;
    line-height: 18px;
}
.list-tabs span {
    padding-bottom: 2px;
}
.list-tabs .active {
    height: 28px;
    padding: 0 6px 0 7px;
    border-left-width: 1px;
    background: #fff;
}
.list-tabs svg {
    width: 18px;
    height: 18px;
}
.list {
    flex: 1;
    min-height: 0;
    margin: 1px 6px 0;
    padding: 2px 1px;
    border: 1px solid #828790;
    background: #fff;
}
.list table {
    width: 100%;
    table-layout: fixed;
    border-spacing: 0;
    color: #000;
    font-family: "DejaVu Sans Condensed", "Noto Sans CJK SC", sans-serif;
    font-size: 13px;
    white-space: nowrap;
}
.c-text {
    width: 250px;
}
.c-mid {
    width: 156px;
}
.c-date {
    width: 125px;
}
.c-num {
    width: 63px;
}
.list thead th,
.list thead td {
    height: 23px;
    padding: 0 0 2px;
    background: #efefef;
}
.list th {
    border-right: 1px solid #a0a0a0;
    border-bottom: 1px solid #a0a0a0;
    font-size: 15px;
    font-weight: normal;
    line-height: 18px;
}
.list th small {
    font-size: 12px;
}
.list tbody td {
    height: 21px;
    padding: 0 1px;
    border-bottom: 1px solid #fff;
    line-height: 18px;
}
.list tbody tr:nth-child(even) td {
    background: #ecf9fb;
}
.list tbody .selected td {
    background: #0078d7;
}
.list .name {
    display: flex;
    align-items: center;
    gap: 1px;
    height: 20px;
    padding-left: 5px;
}
.list .name svg {
    width: 20px;
    height: 20px;
}
.list .date {
    font-size: 12px;
}
.cn,
.show-more a {
    font-size: 15px;
    line-height: 16px;
}
.list .num {
    padding-right: 19px;
    text-align: right;
}
.list tbody .show-more td {
    background: #0f0;
}
.show-more a {
    color: #000;
    text-decoration: none;
}
.dialog-foot {
    display: flex;
    justify-content: space-between;
    height: 40px;
    padding: 7px 7px 0 6px;
    color: #000;
}
.dialog-foot label {
    display: flex;
    align-items: center;
    gap: 4px;
    height: 18px;
}
.dialog-foot span {
    padding-bottom: 3px;
}
.dialog-foot input {
    width: 16px;
    height: 16px;
    margin: 0;
    appearance: none;
    border: 1px solid #333;
    background: #fff;
}
.close-button {
    width: 138px;
    height: 26px;
    padding-bottom: 2px;
    border: 2px solid #0078d7;
    background: #e1e1e1;
    line-height: 20px;
}
```
